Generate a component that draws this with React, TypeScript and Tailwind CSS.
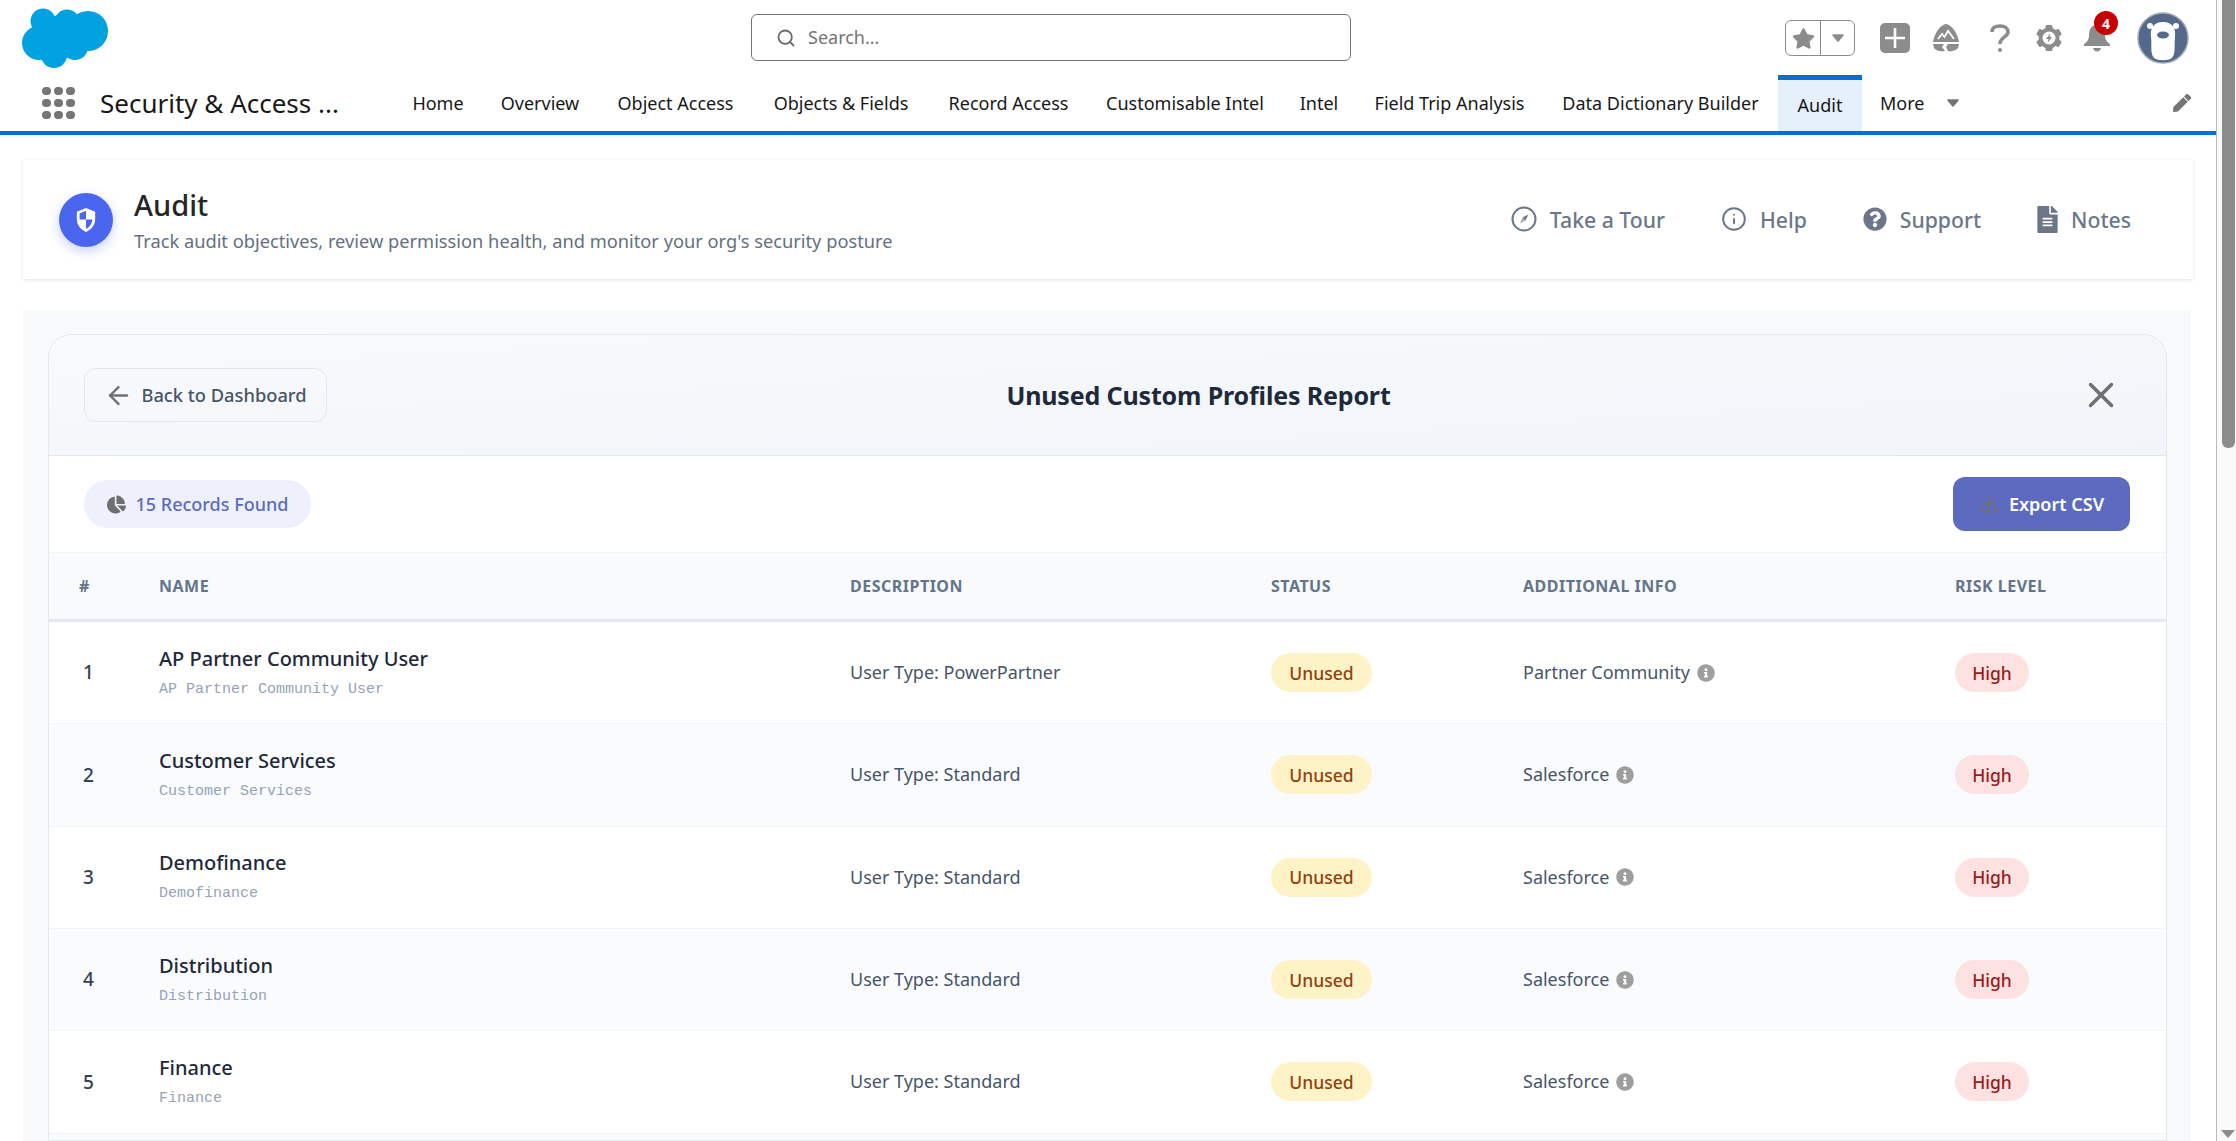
import { ArrowLeft, Download, Info, Search, X } from "lucide-react";
import { FaChartPie, FaFileAlt, FaInfoCircle, FaPen, FaQuestionCircle, FaStar } from "react-icons/fa";
import { IoCaretDown } from "react-icons/io5";

const NAV = [
  { label: "Home", width: 88 },
  { label: "Overview", width: 116 },
  { label: "Object Access", width: 155 },
  { label: "Objects & Fields", width: 176 },
  { label: "Record Access", width: 159 },
  { label: "Customisable Intel", width: 194 },
  { label: "Intel", width: 74 },
  { label: "Field Trip Analysis", width: 187 },
  { label: "Data Dictionary Builder", width: 235 },
];

const ROWS = [
  { name: "AP Partner Community User", type: "PowerPartner", info: "Partner Community" },
  { name: "Customer Services", type: "Standard", info: "Salesforce" },
  { name: "Demofinance", type: "Standard", info: "Salesforce" },
  { name: "Distribution", type: "Standard", info: "Salesforce" },
  { name: "Finance", type: "Standard", info: "Salesforce" },
];

const COLS = "grid grid-cols-[110px_691px_421px_252px_432px_1fr] items-center";

function Cloud() {
  return (
    <svg viewBox="0 0 86 60" className="h-[60px] w-[86px]" fill="#00a1e0">
      <circle cx="21" cy="13" r="12.5" />
      <circle cx="45" cy="14" r="12.5" />
      <circle cx="66" cy="23" r="20" />
      <circle cx="17" cy="35" r="17" />
      <circle cx="42" cy="28" r="22" />
      <circle cx="32" cy="47" r="13" />
      <circle cx="53" cy="39" r="13" />
    </svg>
  );
}

function Trailhead() {
  return (
    <svg viewBox="0 0 28 28" className="h-[28px] w-[28px]" fill="#8c8c8c">
      <path d="M14 0 C19 1 25 7 27 18 H1 C3 7 9 1 14 0 Z" />
      <path d="M1 20 H12 L10 23 L13 27 C8 28 3 26 2 24 Z" />
      <path d="M16 20 H27 L26 24 C24 26 20 28 16 27 L14 23 Z" />
      <path d="M6 15 L10 10 L12.5 13 L16 7 L22 15" fill="none" stroke="#fff" strokeWidth="1.8" />
    </svg>
  );
}

function QuestionMark() {
  return (
    <svg viewBox="0 0 20 28" className="h-[28px] w-[20px]" fill="none" stroke="#8c8c8c" strokeWidth="3.6">
      <path d="M2 8 C2 4 5 2 10 2 C15 2 18 4.5 18 8 C18 13 10 13 10 20" />
      <circle cx="10" cy="26" r="2" fill="#8c8c8c" stroke="none" />
    </svg>
  );
}

function Gear() {
  return (
    <svg viewBox="0 0 28 28" className="h-[28px] w-[28px]">
      <g fill="#8c8c8c">
        <circle cx="14" cy="14" r="10.5" />
        <rect x="10.5" y="1" width="7" height="26" rx="1.5" />
        <rect x="10.5" y="1" width="7" height="26" rx="1.5" transform="rotate(60 14 14)" />
        <rect x="10.5" y="1" width="7" height="26" rx="1.5" transform="rotate(120 14 14)" />
      </g>
      <circle cx="14" cy="14" r="6.5" fill="#fff" />
      <path d="M15.5 9 L11 15 H13.5 L12.5 19 L17 13 H14.5 Z" fill="#8c8c8c" />
    </svg>
  );
}

function Bell() {
  return (
    <svg viewBox="0 0 30 30" className="h-[30px] w-[30px]" fill="#8c8c8c">
      <path d="M15 2 C9 2 7 7 7 12 C7 17 5 19 2 21 V23 H28 V21 C25 19 23 17 23 12 C23 7 21 2 15 2 Z" />
      <path d="M11 25 H19 C18.5 27.5 17 28.5 15 28.5 C13 28.5 11.5 27.5 11 25 Z" />
    </svg>
  );
}

function Avatar() {
  return (
    <svg viewBox="0 0 52 52" className="h-[52px] w-[52px]">
      <circle cx="26" cy="26" r="25" fill="#55698d" stroke="#a3a9b3" strokeWidth="1.5" />
      <circle cx="13" cy="14" r="3" fill="#fff" />
      <circle cx="39" cy="14" r="3" fill="#fff" />
      <path d="M26 10 C16 10 13 17 14 25 C15 34 13 41 17 46 C21 49 31 49 35 46 C39 41 37 34 38 25 C39 17 36 10 26 10 Z" fill="#fff" />
      <ellipse cx="26" cy="23" rx="6" ry="3.5" fill="#55698d" />
    </svg>
  );
}

function ShieldMark() {
  return (
    <svg viewBox="0 0 24 28" className="h-[26px] w-[22px]">
      <path d="M12 1 L22 5 V13 C22 20 17 25 12 27 C7 25 2 20 2 13 V5 Z" fill="#fff" />
      <path d="M12 4 L5 6.8 V13.5 H12 Z M12 13.5 H19 C18.6 18.5 15.5 22 12 23.8 Z" fill="#4a66ee" />
    </svg>
  );
}

function TourIcon() {
  return (
    <svg viewBox="0 0 26 26" className="h-[26px] w-[26px]" fill="none" stroke="currentColor" strokeWidth="2">
      <circle cx="13" cy="13" r="11.5" />
      <path d="M17.5 8.5 L14.5 14.5 L11.5 11.5 Z" fill="currentColor" stroke="none" />
      <path d="M14.5 14.5 L9 17.5 L11.5 11.5 Z" fill="currentColor" stroke="none" opacity="0.6" />
    </svg>
  );
}

function Waffle() {
  return (
    <div className="grid grid-cols-3 gap-[3.5px]">
      {Array.from({ length: 9 }).map((_, i) => (
        <span key={i} className="h-[8.5px] w-[8.5px] rounded-full bg-[#747474]" />
      ))}
    </div>
  );
}

function Badge({ children, tone }: { children: string; tone: "amber" | "red" }) {
  return (
    <span
      className={
        tone === "amber"
          ? "inline-flex h-[39px] w-[101px] items-center justify-center rounded-[20px] bg-[#fef3c7] text-[17.5px] font-medium text-[#92400e]"
          : "inline-flex h-[39px] w-[74px] items-center justify-center rounded-[20px] bg-[#fee2e2] text-[17.5px] font-medium text-[#991b1b]"
      }
    >
      {children}
    </span>
  );
}

function TopBar() {
  return (
    <div className="flex h-[75px] shrink-0 items-start">
      <div className="ml-[22px] mt-[8px]">
        <Cloud />
      </div>
      <div className="ml-[643px] mt-[14px] flex h-[47px] w-[600px] items-center rounded-[6px] border border-[#747474] bg-white pl-[24px]">
        <Search className="h-[20px] w-[20px] text-[#6b6b6b]" strokeWidth={2.2} />
        <span className="ml-[12px] text-[18px] text-[#757575]">Search...</span>
      </div>
      <div className="ml-auto mr-[27px] flex items-center pt-[12px]">
        <div className="flex h-[36px] w-[70px] rounded-[6px] border border-[#8c8c8c]">
          <div className="flex w-[35px] items-center justify-center border-r border-[#8c8c8c]">
            <FaStar className="h-[23px] w-[23px] text-[#8c8c8c]" />
          </div>
          <div className="flex flex-1 items-center justify-center">
            <IoCaretDown className="h-[18px] w-[18px] text-[#8c8c8c]" />
          </div>
        </div>
        <div className="ml-[25px] flex h-[30px] w-[30px] items-center justify-center rounded-[5px] bg-[#8c8c8c]">
          <svg viewBox="0 0 22 22" className="h-[22px] w-[22px]" stroke="#fff" strokeWidth="2.6">
            <path d="M11 1 V21 M1 11 H21" />
          </svg>
        </div>
        <div className="ml-[22px]">
          <Trailhead />
        </div>
        <div className="ml-[30px]">
          <QuestionMark />
        </div>
        <div className="ml-[25px]">
          <Gear />
        </div>
        <div className="relative ml-[19px]">
          <Bell />
          <span className="absolute -right-[6px] -top-[12px] flex h-[24px] w-[24px] items-center justify-center rounded-full bg-[#c70000] text-[14px] font-bold text-white">
            4
          </span>
        </div>
        <div className="ml-[25px]">
          <Avatar />
        </div>
      </div>
    </div>
  );
}

function NavBar() {
  return (
    <div className="flex h-[60px] shrink-0 items-stretch border-b-4 border-[#0070d2]">
      <div className="ml-[42px] flex w-[58px] items-center">
        <Waffle />
      </div>
      <div className="flex w-[294px] items-center text-[26px] text-[#181818]">Security &amp; Access ...</div>
      <div className="flex items-center text-[18px] text-[#181818]">
        {NAV.map((n) => (
          <span key={n.label} className="text-center whitespace-nowrap" style={{ width: n.width }}>
            {n.label}
          </span>
        ))}
      </div>
      <div className="flex w-[84px] items-center justify-center border-t-[5px] border-[#0070d2] bg-[#e6f0fa] text-[18px] text-[#181818]">
        Audit
      </div>
      <div className="ml-[18px] flex items-center text-[18px] text-[#181818]">
        More
        <IoCaretDown className="ml-[20px] h-[18px] w-[18px] text-[#747474]" />
      </div>
      <div className="ml-auto mr-[25px] flex items-center">
        <FaPen className="h-[18px] w-[18px] text-[#747474]" />
      </div>
    </div>
  );
}

function PageHeader() {
  const action = "flex items-center gap-[13px]";
  return (
    <div className="mx-[23px] mt-[25px] flex h-[119px] shrink-0 items-center rounded-[2px] bg-white pl-[36px] pr-[62px] shadow-[0_1px_4px_rgba(15,23,42,0.12)]">
      <div className="flex h-[54px] w-[54px] items-center justify-center rounded-full bg-[#4a66ee] shadow-[0_4px_12px_rgba(74,102,238,0.3)]">
        <ShieldMark />
      </div>
      <div className="ml-[21px]">
        <div className="text-[29px] font-medium leading-[37px] text-[#262626]">Audit</div>
        <div className="mt-[5px] text-[18.25px] leading-[26px] text-[#64707f]">
          Track audit objectives, review permission health, and monitor your org's security posture
        </div>
      </div>
      <div className="ml-auto flex items-center gap-[56px] text-[21.2px] font-medium text-[#6b7789]">
        <div className={action}>
          <TourIcon />
          Take a Tour
        </div>
        <div className={action}>
          <Info className="h-[26px] w-[26px]" strokeWidth={1.8} />
          Help
        </div>
        <div className={action}>
          <FaQuestionCircle className="h-[24px] w-[24px]" />
          Support
        </div>
        <div className={action}>
          <FaFileAlt className="h-[27px] w-[21px]" />
          Notes
        </div>
      </div>
    </div>
  );
}

function ReportCard() {
  return (
    <div className="h-full overflow-hidden rounded-t-[24px] border border-[#e2e8f0] bg-[#fafbfd]">
      <div className="flex h-[121px] items-center justify-between border-b border-[#e2e8f0] bg-gradient-to-br from-[#f8fafc] to-[#f1f5f9] pl-[35px] pr-[34px]">
        <div className="flex h-[54px] w-[243px] items-center justify-center gap-[8px] rounded-[12px] border border-[#e2e8f0] text-[18.3px] font-medium text-[#475569]">
          <ArrowLeft className="h-[29px] w-[29px] text-[#6f6f6f]" strokeWidth={2} />
          Back to Dashboard
        </div>
        <h2 className="pt-[2px] text-[25px] font-bold tracking-[-0.15px] text-[#1e293b]">Unused Custom Profiles Report</h2>
        <div className="flex h-[54px] w-[62px] items-center justify-center">
          <X className="h-[42px] w-[42px] text-[#6f6f6f]" strokeWidth={2} />
        </div>
      </div>
      <div className="flex h-[96px] items-center justify-between bg-white pl-[35px] pr-[36px]">
        <div className="flex h-[48px] w-[227px] items-center justify-center gap-[10px] rounded-full bg-[#eef0fc] text-[18px] font-medium text-[#5c6bc0]">
          <FaChartPie className="h-[19px] w-[19px] text-[#6f6f6f]" />
          15 Records Found
        </div>
        <div className="flex h-[54px] w-[177px] items-center justify-center gap-[10px] rounded-[12px] bg-[#5c6bc0] text-[18px] font-semibold text-white">
          <Download className="h-[20px] w-[20px] text-[#6f6f6f]" strokeWidth={2.4} />
          Export CSV
        </div>
      </div>
      <div className={`${COLS} h-[70px] border-y border-[#f1f5f9] border-b-[3px] border-b-[#e2e8f0] bg-[#f8fafc] text-[16px] font-bold uppercase tracking-[0.5px] text-[#64748b]`}>
        <div className="pl-[30px]">#</div>
        <div>Name</div>
        <div>Description</div>
        <div>Status</div>
        <div>Additional Info</div>
        <div>Risk Level</div>
      </div>
      {ROWS.map((r, i) => (
        <div
          key={r.name}
          className={`${COLS} h-[102.33px] border-b border-[#f1f5f9] ${i % 2 === 1 ? "bg-[#fafbfd]" : "bg-white"}`}
        >
          <div className="pl-[34px] text-[19px] font-medium text-[#334155]">{i + 1}</div>
          <div>
            <div className="text-[20px] font-medium leading-[26px] text-[#1e293b]">{r.name}</div>
            <div className="mt-[8px] font-['Liberation_Mono',monospace] text-[15px] leading-[20px] text-[#94a3b8]">
              {r.name}
            </div>
          </div>
          <div className="text-[18px] text-[#475569]">User Type: {r.type}</div>
          <div>
            <Badge tone="amber">Unused</Badge>
          </div>
          <div className="flex items-center gap-[7px] text-[18px] text-[#475569]">
            {r.info}
            <FaInfoCircle className="h-[18px] w-[18px] text-[#9e9e9e]" />
          </div>
          <div>
            <Badge tone="red">High</Badge>
          </div>
        </div>
      ))}
    </div>
  );
}

function Scrollbar() {
  return (
    <div className="flex w-[20px] flex-col items-end border-l border-[#b8b8b8] bg-[#fafafa] pr-px">
      <div className="h-[448px] w-[13px] rounded-b-[6px] bg-[#8c8c8c]" />
      <div className="mb-[3px] mt-auto h-0 w-0 border-x-[7px] border-t-[8px] border-x-transparent border-t-[#8c8c8c]" />
    </div>
  );
}

export default function App() {
  return (
    <div className="flex h-screen overflow-hidden bg-white font-['Noto_Sans',sans-serif]">
      <div className="flex h-full w-[2216px] flex-col overflow-hidden">
        <TopBar />
        <NavBar />
        <PageHeader />
        <div className="ml-[23px] mr-[25px] mt-[31px] min-h-0 flex-1 bg-[#f8f9fb] pl-[25px] pr-[24px] pt-[24px]">
          <ReportCard />
        </div>
      </div>
      <Scrollbar />
    </div>
  );
}
